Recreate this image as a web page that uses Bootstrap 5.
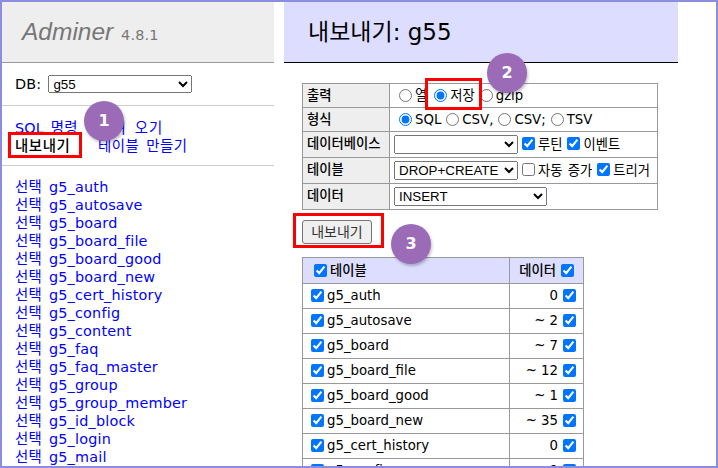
<!DOCTYPE html>
<html lang="ko"><head><meta charset="utf-8"><title>Adminer</title>
<link href="https://cdn.jsdelivr.net/npm/bootstrap@5.3.0/dist/css/bootstrap.min.css" rel="stylesheet">
<style>
html,body{height:100%;margin:0;overflow:hidden;background:#fff}
body{font-family:"DejaVu Sans","Noto Sans CJK KR",sans-serif;font-size:13.3px;line-height:18px;color:#000}
.frame{position:relative;width:718px;height:468px;border:2px solid #8a8de0;overflow:hidden}
.side{width:272px;flex:none;font-size:14.4px;letter-spacing:.2px}
.brand{height:61px;background:#eee;border-bottom:1px solid #999;padding:0 20px;font:italic 24.5px/60px "Liberation Sans",sans-serif;color:#777;letter-spacing:0}
.brand span{font:14.4px "DejaVu Sans",sans-serif;margin-left:1px;letter-spacing:.2px}
.dbrow{height:43px;border-bottom:1px solid #ccc;padding:0 13px;display:flex;align-items:center;gap:7px}
.dbrow select{width:144px;height:18px;font:13.33px "Liberation Sans",sans-serif}
.links{height:60px;border-bottom:1px solid #ccc;padding:13px 13px 0;word-spacing:2px}
.links div{display:flex}
.links a,.tlist a{color:#00f;text-decoration:none}
.links .on{color:#000;font-weight:500;width:83px;flex:none;letter-spacing:.6px}
.links .w1{width:83px;flex:none}
.links .wide{letter-spacing:1.2px}
.links .wide2{letter-spacing:.5px}
.tlist{padding:12px 13px 0;white-space:nowrap}
.tlist a+a{margin-left:7px}
.tlist div{height:18px}
.main{width:394px;flex:none;margin-left:10px}
.ttl{height:61px;background:#ddf;border-bottom:1px solid #000;padding:0 24px;font-size:23px;line-height:60px;font-weight:400;margin:0;font-family:inherit}
.body{padding:20px 18px 0}
.opt{border-collapse:collapse;width:356px;margin:0;word-spacing:1px}
.opt th,.opt td{border:1px solid #999;padding:0 4px;white-space:nowrap;font-weight:400}
.opt th{background:#eee;width:87px;font-weight:500}
.opt select{height:19px;font:13.33px "Liberation Sans",sans-serif;vertical-align:middle}
.opt input{width:13px;height:13px;margin:0 3px 0 5px;vertical-align:-2px}
.opt select+input{margin-left:4px}
.h24{height:24px}.h26{height:26px}
.h26 th,.h26 td{padding-bottom:1px!important}
.h24.first input:nth-of-type(2){margin-left:7px}
.gobtn{display:block;width:70px;height:24px;margin:10px 0 13px;padding:0;font-size:14px;line-height:20px;border:1px solid #767676;border-radius:3px;background:#efefef;color:#333}
.tbl{border-collapse:collapse;width:282px}
.tbl th,.tbl td{border:1px solid #999;padding:0 4px;height:25px;white-space:nowrap;font-weight:400}
.tbl input{width:13px;height:13px;margin:0 3px 0 4px;vertical-align:-2px}
.tbl thead th{background:#ddf;height:26px}
.tbl .n{text-align:right;width:74px}
.tbl .n input{margin:0 3px 0 5px}
.tbl thead .n{padding-right:6px;font-weight:500}
.tbl thead th:first-child{padding-left:7px;font-weight:500}
.redbox{position:absolute;border:3px solid #f00}
.dot{position:absolute;width:40px;height:40px;border-radius:50%;background:#9b6bb8;color:#fff;font:700 16px/40px "DejaVu Sans",sans-serif;text-align:center;box-shadow:1px 2px 3px rgba(0,0,0,.25)}
</style></head><body>
<div class="frame d-flex">
<div class="side">
 <div class="brand">Adminer <span>4.8.1</span></div>
 <div class="dbrow"><label for="db">DB:</label><select id="db"><option>g55</option></select></div>
 <div class="links">
  <div><a class="w1" href="#">SQL 명령</a><a class="wide" href="#">가져 오기</a></div>
  <div><a class="on" href="#">내보내기</a><a class="wide2" href="#">테이블 만들기</a></div>
 </div>
 <div class="tlist">
  <div><a href="#">선택</a><a href="#">g5_auth</a></div>
  <div><a href="#">선택</a><a href="#">g5_autosave</a></div>
  <div><a href="#">선택</a><a href="#">g5_board</a></div>
  <div><a href="#">선택</a><a href="#">g5_board_file</a></div>
  <div><a href="#">선택</a><a href="#">g5_board_good</a></div>
  <div><a href="#">선택</a><a href="#">g5_board_new</a></div>
  <div><a href="#">선택</a><a href="#">g5_cert_history</a></div>
  <div><a href="#">선택</a><a href="#">g5_config</a></div>
  <div><a href="#">선택</a><a href="#">g5_content</a></div>
  <div><a href="#">선택</a><a href="#">g5_faq</a></div>
  <div><a href="#">선택</a><a href="#">g5_faq_master</a></div>
  <div><a href="#">선택</a><a href="#">g5_group</a></div>
  <div><a href="#">선택</a><a href="#">g5_group_member</a></div>
  <div><a href="#">선택</a><a href="#">g5_id_block</a></div>
  <div><a href="#">선택</a><a href="#">g5_login</a></div>
  <div><a href="#">선택</a><a href="#">g5_mail</a></div>
 </div>
</div>
<div class="main">
 <h2 class="ttl">내보내기: g55</h2>
 <div class="body">
  <table class="opt">
   <tr class="h24 first"><th>출력</th><td><input type="radio" name="o">열<input type="radio" name="o" checked>저장<input type="radio" name="o">gzip</td></tr>
   <tr class="h24"><th>형식</th><td><input type="radio" name="f" checked>SQL<input type="radio" name="f">CSV,<input type="radio" name="f">CSV;<input type="radio" name="f">TSV</td></tr>
   <tr class="h26"><th>데이터베이스</th><td><select style="width:124px"><option></option></select><input type="checkbox" checked>루틴<input type="checkbox" checked>이벤트</td></tr>
   <tr class="h26"><th>테이블</th><td><select style="width:124px"><option>DROP+CREATE</option></select><input type="checkbox">자동 증가<input type="checkbox" checked>트리거</td></tr>
   <tr class="h26"><th>데이터</th><td><select style="width:153px"><option>INSERT</option></select></td></tr>
  </table>
  <button class="gobtn" type="button">내보내기</button>
  <table class="tbl">
   <thead><tr><th><input type="checkbox" checked>테이블</th><th class="n">데이터<input type="checkbox" checked></th></tr></thead>
   <tbody>
    <tr><td><input type="checkbox" checked>g5_auth</td><td class="n">0<input type="checkbox" checked></td></tr>
    <tr><td><input type="checkbox" checked>g5_autosave</td><td class="n">~ 2<input type="checkbox" checked></td></tr>
    <tr><td><input type="checkbox" checked>g5_board</td><td class="n">~ 7<input type="checkbox" checked></td></tr>
    <tr><td><input type="checkbox" checked>g5_board_file</td><td class="n">~ 12<input type="checkbox" checked></td></tr>
    <tr><td><input type="checkbox" checked>g5_board_good</td><td class="n">~ 1<input type="checkbox" checked></td></tr>
    <tr><td><input type="checkbox" checked>g5_board_new</td><td class="n">~ 35<input type="checkbox" checked></td></tr>
    <tr><td><input type="checkbox" checked>g5_cert_history</td><td class="n">0<input type="checkbox" checked></td></tr>
    <tr><td><input type="checkbox" checked>g5_config</td><td class="n">~ 9<input type="checkbox" checked></td></tr>
   </tbody>
  </table>
 </div>
</div>
<div class="redbox" style="left:6px;top:130px;width:74px;height:26px"></div>
<div class="redbox" style="left:423px;top:76px;width:57px;height:32px"></div>
<div class="redbox" style="left:291px;top:211px;width:91px;height:35px"></div>
<div class="dot" style="left:82px;top:99px">1</div>
<div class="dot" style="left:485px;top:51px">2</div>
<div class="dot" style="left:389px;top:222px">3</div>
</div>
<script src="https://cdn.jsdelivr.net/npm/bootstrap@5.3.0/dist/js/bootstrap.bundle.min.js"></script>
</body></html>
